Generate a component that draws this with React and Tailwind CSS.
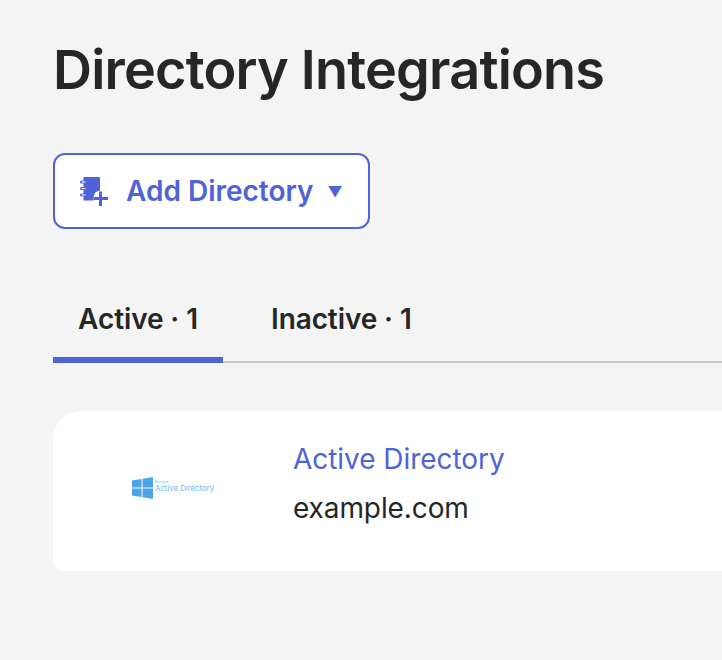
import React from "react";

const AddDirectoryIcon = () => (
  <svg width="30" height="30" viewBox="0 0 30 30" fill="none" className="shrink-0">
    <path d="M4.500 1H20a1 1 0 0 1 1 1v12.500a7.500 7.500 0 0 0-6.500 6.500v3.500H4.500z" fill="#4f63d9" />
    <path d="M2.500 6h5M2.500 12.500h5M2.500 19h5" stroke="#4f63d9" strokeWidth="3.200" strokeLinecap="round" />
    <path d="M2.500 6h4M2.500 12.500h4M2.500 19h4" stroke="#ffffff" strokeWidth="1" />
    <path d="M21.500 15.500v14.500M14.500 22.500h14.500" stroke="#4f63d9" strokeWidth="3" />
  </svg>
);

const WindowsLogo = () => (
  <svg width="21" height="22" viewBox="0 0 21 22" className="shrink-0">
    <path d="M0 3.500L9.500 2v8.500H0z" fill="#4aa5ea" />
    <path d="M10.500 1.800L21 0v10.500H10.500z" fill="#4aa5ea" />
    <path d="M0 11.500h9.500V20L0 18.500z" fill="#4aa5ea" />
    <path d="M10.500 11.500H21V22l-10.500-1.800z" fill="#4aa5ea" />
  </svg>
);

export default function App() {
  return (
    <div className="min-h-[660px] w-[722px] overflow-hidden bg-[#f4f4f4] pl-[53px] pt-[36px] font-['Inter',sans-serif] text-[#262626]">
      <h1 className="h-[68px] whitespace-nowrap text-[54px] leading-[68px] font-semibold tracking-[-0.8px]">
        Directory Integrations
      </h1>

      <button className="mt-[49px] flex h-[76px] w-[317px] items-center rounded-[12px] border-2 border-[#4f63d9] bg-white pl-[24px] text-[#4f63d9]">
        <AddDirectoryIcon />
        <span className="ml-[17px] text-[28px] font-semibold whitespace-nowrap">Add Directory</span>
        <span className="ml-[14px] text-[15px] leading-none">▼</span>
      </button>

      <div className="mt-[64px] flex h-[70px] items-stretch border-b-2 border-[#c9c9c9] text-[28px] font-semibold">
        <div className="relative flex w-[170px] justify-center pt-[6px] leading-[40px] tracking-[-0.1px] whitespace-nowrap">
          Active · 1
          <div className="absolute right-0 -bottom-[2px] left-0 h-[6px] bg-[#4f63d9]" />
        </div>
        <div className="ml-[48px] pt-[6px] leading-[40px] tracking-[-0.1px] whitespace-nowrap">Inactive · 1</div>
      </div>

      <div className="mt-[48px] flex h-[160px] items-center rounded-tl-[28px] rounded-bl-[10px] bg-white pb-[15px]">
        <div className="mt-[9px] flex w-[240px] items-center pl-[79px]">
          <WindowsLogo />
          <div className="mb-[3px] ml-[2px] flex flex-col text-[#6db8ec]">
            <span className="text-[3px] leading-[4px] whitespace-nowrap">Microsoft</span>
            <span className="text-[7.800px] leading-[9px] whitespace-nowrap">Active Directory</span>
          </div>
        </div>
        <div className="flex flex-col">
          <a className="text-[28px] leading-[40px] tracking-[-0.05px] text-[#4f63d9]">Active Directory</a>
          <span className="mt-[9px] text-[28px] leading-[40px] tracking-[-0.1px]">example.com</span>
        </div>
      </div>
    </div>
  );
}
